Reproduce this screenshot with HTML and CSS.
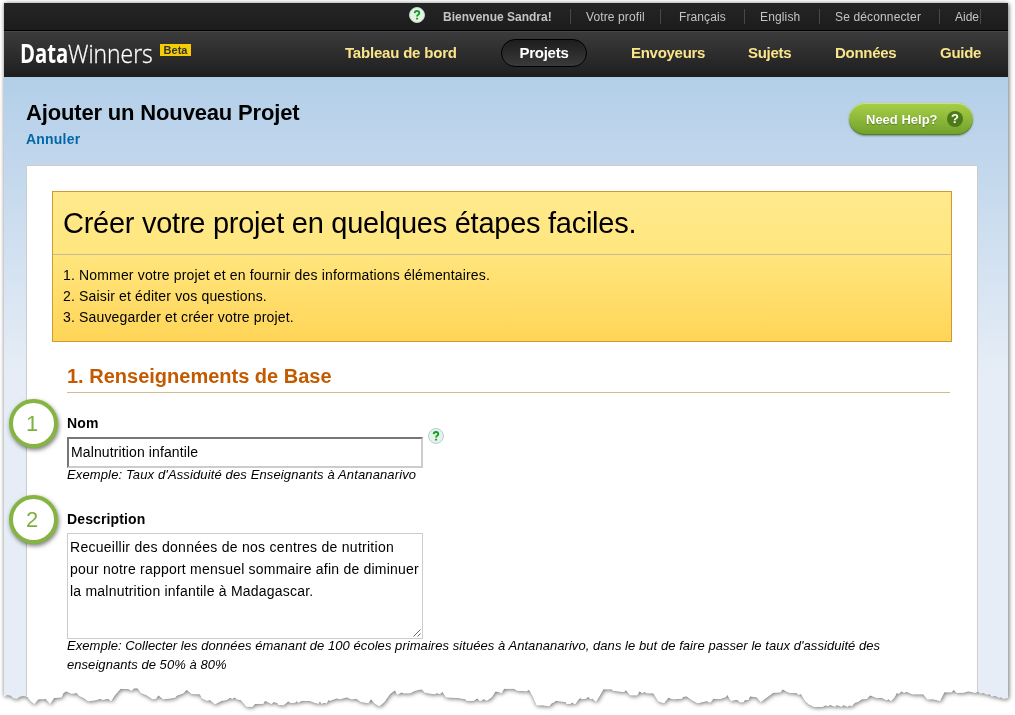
FILE: index.html
```html
<!DOCTYPE html>
<html lang="fr">
<head>
<meta charset="utf-8">
<title>DataWinners</title>
<link rel="stylesheet" href="styles.css">
</head>
<body>
<svg class="defs" width="0" height="0" aria-hidden="true">
  <defs>
    <clipPath id="torn">
      <path transform="translate(-4 627) scale(.33333)" d="M12-1890H3024V204L3010 207L3003 202L2998 204L2985 198L2975 200L2968 192L2962 195L2950 189L2940 191L2935 185L2925 188L2905 184L2890 188L2870 188L2861 179L2855 187L2833 187L2820 213L2800 208L2782 208L2770 193L2737 193L2720 185L2712 188L2704 184L2697 191L2690 189L2684 202L2673 213L2665 207L2660 211L2645 203L2630 204L2610 196L2604 203L2600 207L2585 208L2575 215L2565 218L2555 229L2548 226L2543 230L2530 225L2525 230L2510 225L2505 230L2490 224L2485 229L2475 226L2469 230L2443 231L2425 222L2415 212L2403 192L2395 194L2390 189L2370 189L2358 184L2348 178L2342 187L2320 188L2297 205L2282 216L2270 202L2250 199L2245 210L2235 210L2230 217L2220 217L2212 209L2192 212L2182 194L2178 201L2160 207L2140 206L2135 213L2130 218L2120 213L2093 220L2075 210L2060 199L2050 200L2045 206L2020 208L2005 203L1992 220L1975 214L1960 190L1940 190L1933 185L1928 190L1918 184L1912 196L1890 196L1878 180L1872 186L1840 182L1835 178L1810 178L1800 196L1788 215L1778 206L1772 208L1765 200L1757 206L1745 208L1740 203L1725 223L1715 217L1712 222L1700 222L1697 216L1667 212L1660 218L1655 220L1647 229L1630 226L1610 226L1598 198L1587 179L1580 184L1552 182L1542 176L1512 176L1505 189L1487 184L1475 202L1460 212L1452 207L1440 214L1432 205L1420 213L1400 212L1395 207L1375 204L1338 202L1327 185L1320 192L1310 189L1305 193L1275 188L1265 178L1255 180L1245 182L1230 190L1210 190L1205 187L1192 194L1185 181L1170 192L1153 216L1138 229L1123 220L1113 207L1105 220L1082 215L1070 206L1055 208L1040 202L1020 208L1010 205L990 212L985 210L980 220L970 218L965 222L960 214L955 221L940 217L930 213L905 212L895 218L890 213L885 218L872 219L865 214L850 226L835 224L832 218L820 216L815 222L795 212L790 221L765 222L757 230L740 230L722 210L710 208L705 202L697 206L690 203L680 210L665 212L645 223L630 210L620 212L605 204L600 193L575 192L560 179L550 190L530 197L525 203L490 208L475 196L468 206L458 208L440 196L422 188L413 175L402 175L395 182L385 177L362 176L345 195L333 214L325 206L308 209L300 206L290 210L265 214L250 203L238 198L230 189L215 191L198 184L190 190L185 202L162 204L150 222L138 207L115 208L103 222L92 213L82 200L70 198L60 200L50 207L40 205L32 197L22 195L12 200Z"/>
    </clipPath>
  </defs>
</svg>
<div class="paper">
  <div class="sheet">
    <div class="topbar">
      <svg class="help" viewBox="0 0 16 16"><circle cx="8" cy="8" r="7.5" fill="#e4f3e2" stroke="#bfd3d2"/><path d="M5.7 6.1Q5.8 4 8 4T10.3 6Q10.3 7.1 9.1 7.8Q8.1 8.4 8.1 9.6M8.1 10.8V12.6" fill="none" stroke="#169c28" stroke-width="1.9"/></svg>
      <ul class="account">
        <li class="a1"><b>Bienvenue Sandra!</b></li>
        <li class="a2">Votre profil</li>
        <li class="a3">Français</li>
        <li class="a4">English</li>
        <li class="a5">Se déconnecter</li>
        <li class="a6">Aide</li>
      </ul>
    </div>
    <header class="header">
      <div class="logo"><span class="data">Data</span><span class="winners">Winners</span><span class="beta">Beta</span></div>
      <nav class="nav">
        <a class="n1">Tableau de bord</a>
        <a class="n2">Projets</a>
        <a class="n3">Envoyeurs</a>
        <a class="n4">Sujets</a>
        <a class="n5">Données</a>
        <a class="n6">Guide</a>
      </nav>
    </header>
    <div class="title-row">
      <div>
        <h1>Ajouter un Nouveau Projet</h1>
        <a class="cancel">Annuler</a>
      </div>
      <div class="need-help"><span>Need Help?</span><i>?</i></div>
    </div>
    <main class="panel">
      <section class="steps">
        <h2>Créer votre projet en quelques étapes faciles.</h2>
        <ol>
          <li>1. Nommer votre projet et en fournir des informations élémentaires.</li>
          <li>2. Saisir et éditer vos questions.</li>
          <li>3. Sauvegarder et créer votre projet.</li>
        </ol>
      </section>
      <section class="form">
        <h3>1. Renseignements de Base</h3>
        <div class="field name">
          <div class="label">Nom</div>
          <div class="row">
            <div class="input">Malnutrition infantile</div>
            <svg class="help" viewBox="0 0 16 16"><circle cx="8" cy="8" r="7.5" fill="#e4f3e8" stroke="#b3cfdb"/><path d="M5.7 6.1Q5.8 4 8 4T10.3 6Q10.3 7.1 9.1 7.8Q8.1 8.4 8.1 9.6M8.1 10.8V12.6" fill="none" stroke="#169c28" stroke-width="1.9"/></svg>
          </div>
          <p class="hint name-hint">Exemple: Taux d'Assiduité des Enseignants à Antananarivo</p>
          <div class="badge">1</div>
        </div>
        <div class="field desc">
          <div class="label">Description</div>
          <div class="textarea"><span class="first-line">Recueillir des données de nos centres de nutrition</span><br>pour notre rapport mensuel sommaire afin de diminuer<br>la malnutrition infantile à Madagascar.
            <svg class="grip" viewBox="0 0 8 8"><path d="M.5 7.5L7.5.5M4.5 7.5L7.5 4.5" stroke="#555" stroke-width=".9"/></svg>
          </div>
          <p class="hint desc-hint">Exemple: Collecter les données émanant de 100 écoles primaires situées à Antananarivo, dans le but de faire passer le taux d'assiduité des<br>enseignants de 50% à 80%</p>
          <div class="badge">2</div>
        </div>
      </section>
    </main>
  </div>
</div>
</body>
</html>
```
FILE: styles.css
```css
* { box-sizing: border-box; }
body { margin: 0; background: #fff; overflow: hidden; font-family: "Liberation Sans", Arial, sans-serif; font-size: 14px; color: #000; }
.defs { position: absolute; }
h1, h2, h3, p, ul, ol { margin: 0; padding: 0; font-weight: normal; }
ul, ol { list-style: none; }
.paper { padding: 3px 0 0 4px; height: 715px; overflow: hidden; filter: drop-shadow(1px 1px 2px rgba(0,0,0,.4)) drop-shadow(0 0 2px rgba(0,0,0,.25)); }
.sheet { display: flex; flex-direction: column; width: 1004px; height: 705px; overflow: hidden; clip-path: url(#torn); background: linear-gradient(#b2cfe8 74px, #c0d6ec 150px, #e6edf6 370px); white-space: nowrap; }

.topbar { flex: none; height: 28px; background: linear-gradient(#252525, #1c1c1c); border-bottom: 1px solid #000; display: flex; padding-left: 405px; color: #c4c4c4; font-size: 12px; }
.help { width: 16px; height: 16px; flex: none; }
.topbar .help { margin-top: 4px; }
.account { display: flex; margin-left: 18px; padding-top: 6px; }
.account li { height: 15px; line-height: 16px; border-right: 1px solid #484848; }
.a1 { width: 128px; } .a2 { width: 90px; padding-left: 15px; letter-spacing: .12px; } .a3 { width: 84px; padding-left: 18px; letter-spacing: .1px; }
.a4 { width: 75px; padding-left: 15px; letter-spacing: .15px; } .a5 { width: 120px; padding-left: 15px; letter-spacing: .14px; } .a6 { width: 41px; padding-left: 15px; }

.header { flex: none; height: 46px; display: flex; background: linear-gradient(#3b3b3b, #1e1e1e); border-top: 1px solid #484848; }
.logo { width: 341px; padding: 7px 0 0 16px; display: flex; color: #fff; font-family: "Open Sans", sans-serif; font-size: 26px; line-height: 28px; }
.data { font-weight: 700; width: 48px; transform: scaleX(.78); transform-origin: 0 0; }
.winners { font-weight: 300; width: 92px; transform: scaleX(.88); transform-origin: 0 0; -webkit-text-stroke: .3px #fff; }
.beta { width: 31px; height: 12px; margin-top: 5px; background: #f6cd05; color: #333; font: bold 11px/12px "Liberation Sans", Arial, sans-serif; text-align: center; }
.nav { display: flex; padding-top: 7px; font-size: 15px; letter-spacing: -.28px; font-weight: bold; line-height: 28px; color: #fbe58a; }
.n1 { width: 156px; letter-spacing: -.2px; }
.n2 { width: 86px; height: 28px; line-height: 26px; border: 1px solid #000; border-radius: 14px; background: linear-gradient(#1d1d1d, #3a3a3a); color: #fff; text-align: center; margin-right: 44px; }
.n3 { width: 117px; } .n4 { width: 87px; } .n5 { width: 105px; }

.title-row { flex: none; height: 88px; display: flex; justify-content: space-between; padding: 21px 35px 0 22px; }
h1 { font-size: 22px; line-height: 30px; font-weight: bold; letter-spacing: -.16px; }
.cancel { display: block; font-size: 14px; line-height: 22px; font-weight: bold; color: #0068a8; letter-spacing: .2px; }
.need-help { width: 124px; height: 32px; margin-top: 5px; border-radius: 16px; background: linear-gradient(#a9cf45, #70a02c); box-shadow: inset 0 1px 0 #c9e27c, inset 0 -1px 0 #557f20, 0 1px 2px rgba(0,0,0,.35); color: #fff; font-weight: bold; font-size: 13px; line-height: 33px; padding-left: 17px; display: flex; text-shadow: 0 1px 1px #567f1e; }
.need-help span { width: 81px; }
.need-help i { width: 16px; height: 16px; margin-top: 8px; border-radius: 50%; background: #4c7919; line-height: 16px; text-align: center; font-style: normal; }

.panel { flex: 1; min-height: 0; width: 952px; margin-left: 22px; padding: 25px 25px 0; background: #fff; border: 1px solid #ccc; border-bottom: 0; }
.steps { width: 900px; height: 151px; border: 1px solid #cf9a33; background: linear-gradient(#ffe98c, #ffe67f 40%, #ffd557); }
.steps h2 { height: 63px; border-bottom: 1px solid #c9b994; padding-left: 10px; font-size: 29px; line-height: 63px; letter-spacing: -.26px; }
.steps ol { padding: 10px 0 0 10px; line-height: 21px; letter-spacing: .16px; }
.form { padding: 19px 0 0 15px; }
h3 { width: 883px; height: 32px; border-bottom: 1px solid #cdbf8c; color: #c45a00; font-size: 20px; font-weight: bold; line-height: 30px; }
.field { position: relative; padding-top: 20px; }
.name { height: 96px; }
.label { font-weight: bold; font-size: 14px; line-height: 20px; height: 24px; letter-spacing: .12px; }
.row { display: flex; }
.input { width: 356px; height: 31px; border: 2px solid #777; border-right-color: #ccc; border-bottom-color: #ccc; padding-left: 2px; line-height: 26px; letter-spacing: .12px; }
.row .help { margin: -9px 0 0 5px; }
.hint { font-size: 13px; font-style: italic; line-height: 19px; letter-spacing: .055px; }
.name-hint { line-height: 14px; letter-spacing: .13px; }
.desc-hint { margin-top: -3px; }
.textarea { position: relative; width: 356px; height: 106px; border: 1px solid #ccc; padding: 2px; line-height: 22px; letter-spacing: .215px; }
.first-line { letter-spacing: .27px; }
.grip { position: absolute; right: 1px; bottom: 1px; width: 8px; height: 8px; }
.badge { position: absolute; left: -58px; top: 6px; width: 49px; height: 49px; border: 4px solid #86b440; border-radius: 50%; background: #fff; color: #7db03c; font: 300 22px/41px "Liberation Sans", Arial, sans-serif; text-align: center; padding-right: 3px; box-shadow: 1px 2px 4px rgba(0,0,0,.5); }
```
